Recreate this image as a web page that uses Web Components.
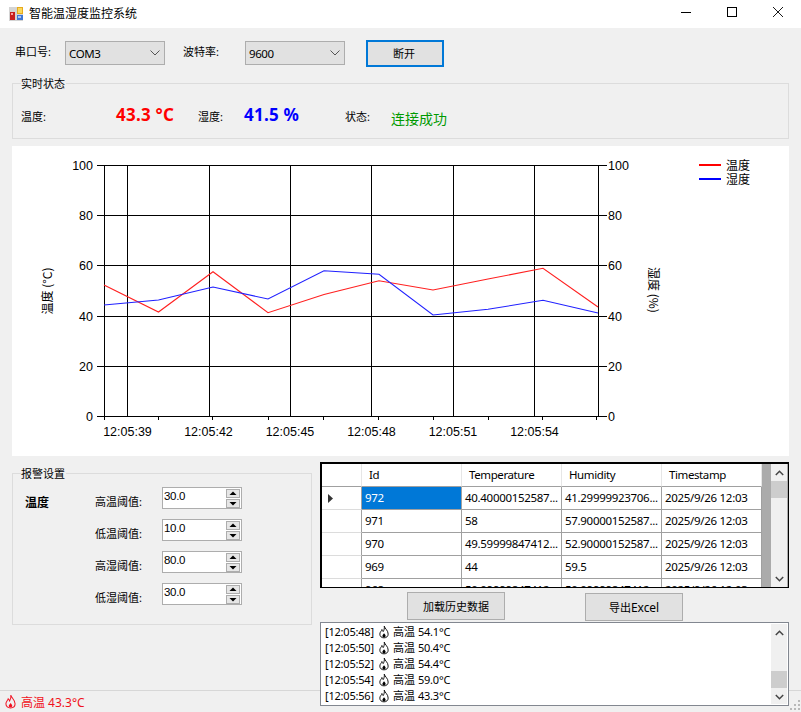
<!DOCTYPE html>
<html lang="zh"><head><meta charset="utf-8"><title>智能温湿度监控系统</title>
<style>
html,body{margin:0;padding:0;background:#f0f0f0}
body{width:801px;height:712px;overflow:hidden;font:11px "Noto Sans","Noto Sans CJK SC",sans-serif;color:#000}
</style></head><body>
<app-window>
  <title-bar>智能温湿度监控系统</title-bar>
  <connect-bar></connect-bar>
  <group-box legend="实时状态" style="--m:16px 12px 0;--h:56px"><live-status></live-status></group-box>
  <trend-chart></trend-chart>
  <lower-area></lower-area>
</app-window>
<script>
function def(name,html,init){
  customElements.define(name,class extends HTMLElement{
    connectedCallback(){
      if(this.shadowRoot)return;
      const r=this.attachShadow({mode:'open'});
      r.innerHTML=typeof html==='function'?html(this):html;
      if(init)init(r,this);
    }
  });
}

def('flame-icon',`<style>:host{display:inline-block;flex:none;width:var(--w,10px);height:var(--fh,14px);vertical-align:var(--va,-3px)}svg{display:block;width:100%;height:100%}</style>
<svg viewBox="0 0 12 16"><path d="M6.3 1C7 4 11 6 11 10.500C11 13.500 8.700 15 6 15C3.300 15 1 13.500 1 10.500C1 8 3 7 3.500 5C4.500 6 4.800 7 5 7.500C6 6 6.800 3.500 6.300 1Z" fill="none" stroke="currentColor" stroke-width="1.100"/><path d="M6 9.500C7 10.800 8.300 11.700 7.900 13.200C7.500 14.700 4.500 14.700 4.100 13.200C3.800 11.900 5.300 11 6 9.500Z" fill="currentColor"/></svg>`);

def('app-window',`<style>:host{display:flex;flex-direction:column;width:801px;height:712px;background:#f0f0f0;overflow:hidden}</style><slot></slot>`);

def('title-bar',`<style>
:host{display:flex;align-items:center;height:28px;background:#fff;padding-left:9px;box-sizing:border-box;font-size:12px}
svg{flex:none}
.t{margin-left:6px;flex:1;position:relative;top:-1px}
.c{display:flex;align-items:center;height:28px;padding-right:17px;gap:34px}
.c svg{display:block;width:12px;height:12px;position:relative;top:-2px}
</style>
<svg width="14" height="14" viewBox="0 0 14 14" shape-rendering="crispEdges"><rect width="14" height="14" fill="#d4d4d4"/><rect x="8" y="0" width="6" height="7" fill="#e8a91c"/><rect x="9" y="1" width="4" height="5" fill="#f9d85c"/><rect x="1" y="5" width="5" height="8" fill="#c81e1e"/><rect x="2" y="6" width="2" height="2" fill="#f4a0a0"/><rect x="8" y="8" width="6" height="5" fill="#3f77d6"/><rect x="9" y="9" width="3" height="2" fill="#a8c6f4"/></svg>
<span class="t"><slot></slot></span>
<span class="c">
<svg viewBox="0 0 12 12"><path d="M1 6.500H11" stroke="#000" fill="none" shape-rendering="crispEdges"/></svg>
<svg viewBox="0 0 12 12"><rect x="1.500" y="1.500" width="9" height="9" stroke="#000" fill="none" shape-rendering="crispEdges"/></svg>
<svg viewBox="0 0 12 12"><path d="M1 1L11 11M11 1L1 11" stroke="#000" stroke-width=".9" fill="none"/></svg>
</span>`);

def('win-select',h=>`<style>
:host{display:flex;align-items:center;box-sizing:border-box;width:100px;height:24px;background:#e1e1e1;border:1px solid #adadad;padding-left:3px;font-size:11.500px;letter-spacing:-.4px;color:#000}
.v{flex:1}
svg{margin-right:3px}
</style><span class="v">${h.getAttribute('value')}</span><svg width="12" height="8" viewBox="0 0 12 8"><path d="M1.500 1.500L6 6L10.500 1.500" fill="none" stroke="#555" stroke-width="1"/></svg>`);

def('win-button',`<style>
:host{display:flex;align-items:center;justify-content:center;box-sizing:border-box;background:#e1e1e1;border:1px solid #adadad;color:#000}
:host([focus]){border:2px solid #0078d7}
</style><slot></slot>`);

def('connect-bar',`<style>
:host{display:flex;align-items:flex-start;height:27px;margin-top:12px;padding-left:15px}
.l{line-height:24px;margin-top:0}
win-select{margin-top:1px}
win-button{padding:0 2px 2px 0}
</style>
<span class="l" style="width:50px">串口号:</span><win-select value="COM3"></win-select>
<span class="l" style="margin-left:18px;width:62px">波特率:</span><win-select value="9600"></win-select>
<win-button focus style="width:78px;height:27px;margin-left:21px">断开</win-button>`);

def('group-box',h=>`<style>
:host{display:block;position:relative;box-sizing:border-box;margin:var(--m,0);height:var(--h,auto);border:1px solid #dcdcdc}
.lg{position:absolute;left:8px;top:-6px;padding:0 1px 0 0;background:#f0f0f0;line-height:12px}
</style><span class="lg">${h.getAttribute('legend')}</span><slot></slot>`);

def('live-status',`<style>
:host{display:grid;grid-template-columns:95px 82px 46px 101px 46px 1fr;align-items:center;height:100%;padding:0 0 0 8px;position:relative;box-sizing:border-box}
.b{font-weight:700;font-size:17px;line-height:20px;margin-top:8px;font-family:"Noto Sans",sans-serif;letter-spacing:.25px}
.s{margin-top:9px}
.ok{font-size:14px;color:#009a00;margin-top:16px;line-height:20px}
</style>
<span class="s">温度:</span><span class="b" style="color:#f00">43.3 °C</span>
<span class="s">湿度:</span><span class="b" style="color:#00f">41.5 %</span>
<span class="s">状态:</span><span class="ok">连接成功</span>`);

function chartSvg(){
 const ys=[0,20,40,60,80,100];
 let g='';
 const xg=[127,209,290,371,453,534];
 const lx=[127.5,208.5,290,371.5,453,534.5];
 const labels=['12:05:39','12:05:42','12:05:45','12:05:48','12:05:51','12:05:54'];
 const l=104.5,r=598.5;
 [416,366,316,265,215,165].forEach((y,i)=>{
   g+=`<path d="M97 ${y+.5}H607"/>`;
   g+=`<text x="93" y="${y+5}" text-anchor="end">${ys[i]}</text><text x="608" y="${y+5}">${ys[i]}</text>`;
 });
 xg.forEach((x,i)=>{g+=`<path d="M${x+.5} 165V416"/><text x="${lx[i]}" y="436" text-anchor="middle">${labels[i]}</text>`});
 g+=`<path d="M${l} 165V416M${r} 165V416"/>`;
 [104,158,212,268,323,378,433,488,542,596].forEach(x=>{g+=`<path d="M${x+.5} 416V420"/>`});
 const xs=[104,158.5,213,268,324,379,433,488,543,598];
 const red=[285,312,271.7,312.7,294.5,280.7,290,279,268.3,307];
 const blue=[305,300,287,299,270.7,274.3,315,309.3,300.3,313];
 const pl=a=>a.map((y,i)=>xs[i]+','+y).join(' ');
 return `<svg width="777" height="310" viewBox="12 146 777 310" style="display:block">
 <g stroke="#000" fill="none" shape-rendering="crispEdges" class="ax">${g}</g>
 <polyline points="${pl(red)}" fill="none" stroke="#ff2020" stroke-width="1.100"/>
 <polyline points="${pl(blue)}" fill="none" stroke="#2020ff" stroke-width="1.100"/>
 <text class="cj" transform="translate(52 291) rotate(-90)" text-anchor="middle">温度 (°C)</text>
 <text class="cj" transform="translate(649 290) rotate(90)" text-anchor="middle">湿度 (%)</text>
 <path d="M699 165H721" stroke="#f00" stroke-width="2"/><path d="M699 179H721" stroke="#00f" stroke-width="2"/>
 <text class="cj" x="726" y="169.500">温度</text><text class="cj" x="726" y="183.500">湿度</text>
 </svg>`;
}
def('trend-chart',()=>`<style>
:host{display:block;margin:7px 12px 0;width:777px;height:310px;background:#fff;flex:none}
text{font:12.500px "Liberation Sans",sans-serif;fill:#000;stroke:none}
.cj{font:12px "Noto Sans CJK SC","Noto Sans",sans-serif}
</style>${chartSvg()}`);

def('num-spin',h=>`<style>
:host{display:flex;box-sizing:border-box;width:80px;height:22px;background:#fff;border:1px solid #adadad;font:11.500px "Liberation Sans",sans-serif;letter-spacing:-.3px;padding-left:1px;line-height:17px;color:#000}
.v{flex:1}
.s{display:flex;flex-direction:column;justify-content:center;gap:1px;width:14px;margin-right:1px}
.s svg{display:block;box-sizing:border-box;width:14px;height:9px;background:#e6e6e6;border:1px solid #adadad}
</style><span class="v">${h.getAttribute('value')}</span><span class="s">
<svg viewBox="0 0 12 7"><path d="M6 1.500L9.500 5H2.500Z" fill="#000"/></svg><svg viewBox="0 0 12 7"><path d="M6 5.500L9.500 2H2.500Z" fill="#000"/></svg></span>`);

def('alarm-settings',`<style>
:host{display:grid;grid-template-columns:70px 67px 80px;grid-auto-rows:22px;row-gap:10px;padding:13px 0 0 12px;align-items:center}
.h{font-weight:700;font-size:12px;line-height:22px;position:relative;top:5px}
.l{text-align:left;white-space:nowrap;line-height:22px;position:relative;top:4px}
</style>
<span class="h">温度</span><span class="l">高温阈值:</span><num-spin value="30.0"></num-spin>
<span></span><span class="l">低温阈值:</span><num-spin value="10.0"></num-spin>
<span></span><span class="l">高湿阈值:</span><num-spin value="80.0"></num-spin>
<span></span><span class="l">低湿阈值:</span><num-spin value="30.0"></num-spin>`);

def('scroll-bar',h=>`<style>
:host{display:flex;flex-direction:column;align-items:center;flex:none;box-sizing:border-box;width:16px;background:#f0f0f0;position:relative}
.a{height:17px;display:flex;align-items:center;justify-content:center;flex:none}
.tr{flex:1;display:flex;flex-direction:column;width:100%}
.th{height:17px;background:#cdcdcd;margin-top:${h.getAttribute('pos')}px}
</style><span class="a"><svg width="9" height="6" viewBox="0 0 9 6"><path d="M.8 5L4.500 1.300L8.200 5" fill="none" stroke="#444" stroke-width="1.500"/></svg></span>
<span class="tr"><span class="th"></span></span>
<span class="a"><svg width="9" height="6" viewBox="0 0 9 6"><path d="M.8 1L4.500 4.700L8.200 1" fill="none" stroke="#444" stroke-width="1.500"/></svg></span>`);

const rows=[['972','40.40000152587...','41.29999923706...','2025/9/26 12:03'],
['971','58','57.90000152587...','2025/9/26 12:03'],
['970','49.59999847412...','52.90000152587...','2025/9/26 12:03'],
['969','44','59.5','2025/9/26 12:03'],
['968','50.09999847412...','50.09999847412...','2025/9/26 12:03']];
def('data-grid',()=>`<style>
:host{display:flex;box-sizing:border-box;height:126px;border:solid #000;border-width:2px 1px 1px 2px;background:#ababab;font-size:11.500px;letter-spacing:-.3px;overflow:hidden;flex:none}
.g{display:grid;grid-template-columns:40px repeat(4,100px);grid-auto-rows:23px;align-content:start;width:440px;flex:none}
.g>*{box-sizing:border-box;background:#fff;border-right:1px solid #a0a0a0;border-bottom:1px solid #a0a0a0;padding-left:3px;white-space:nowrap;overflow:hidden;line-height:22px}
.hd{padding-left:7px!important;border-right-color:#e6e6e6!important;letter-spacing:-.4px}
.rh{padding:0!important;display:flex;align-items:center;justify-content:flex-start;border-bottom-color:#dcdcdc!important}
.rh svg{margin-left:6px}
.sel{background:#0078d7!important;color:#fff}
.gap{flex:1}
scroll-bar{margin-right:1px}
</style><div class="g">
<div class="hd"></div><div class="hd">Id</div><div class="hd">Temperature</div><div class="hd">Humidity</div><div class="hd">Timestamp</div>
${rows.map((r,i)=>`<div class="rh">${i==0?'<svg width="5" height="9" viewBox="0 0 5 9"><path d="M0 0L5 4.500L0 9Z" fill="#333"/></svg>':''}</div>`+r.map((c,j)=>`<div class="${i==0&&j==0?'sel':''}">${c}</div>`).join('')).join('')}
</div><span class="gap"></span><scroll-bar pos="0"></scroll-bar>`);

const logs=[['12:05:48','54.1'],['12:05:50','50.4'],['12:05:52','54.4'],['12:05:54','59.0'],['12:05:56','43.3']];
def('log-box',()=>`<style>
:host{display:flex;box-sizing:border-box;height:84px;border:1px solid #828790;background:#fff;font-size:11px;flex:none;position:relative;z-index:1;padding:1px 1px 1px 0}
.ls{flex:1;padding:0 0 0 4px}
.r{height:16px;line-height:16px;white-space:nowrap;display:flex;align-items:center;letter-spacing:-.2px}
.z{margin:0 3px 0 0;letter-spacing:0}
flame-icon{margin:0 4px 0 5px}
</style><div class="ls">${logs.map(([a,b])=>`<div class="r">[${a}]<flame-icon></flame-icon><span class="z">高温</span>${b}°C</div>`).join('')}</div><scroll-bar pos="30"></scroll-bar>`);

def('status-strip',`<style>
:host{display:flex;align-items:center;box-sizing:border-box;height:22px;border-top:1px solid #d7d7d7;color:#f01020;padding-left:5px;position:relative;font-size:12px}
.t{margin-left:5px}
.grip{position:absolute;right:1px;bottom:2px}
flame-icon{--w:11px;--fh:15px}
</style><flame-icon></flame-icon><span class="t">高温 43.3°C</span>
<svg class="grip" width="10" height="10" viewBox="0 0 10 10" fill="#b8b8b8" shape-rendering="crispEdges"><rect x="8" y="0" width="2" height="2"/><rect x="4" y="4" width="2" height="2"/><rect x="8" y="4" width="2" height="2"/><rect x="0" y="8" width="2" height="2"/><rect x="4" y="8" width="2" height="2"/><rect x="8" y="8" width="2" height="2"/></svg>`);

def('lower-area',`<style>
:host{display:grid;grid-template-columns:12px 300px 8px 469px 12px;grid-template-rows:1fr;flex:1;min-height:0}
group-box{grid-area:1/2;align-self:start}
.r{grid-area:1/4;display:flex;flex-direction:column;padding-top:6px;position:relative;z-index:1}
status-strip{grid-area:1/1/2/-1;align-self:end}
.b{display:flex;height:30px;margin-top:4px;flex:none}
win-button{width:98px;height:28px}
</style>
<status-strip></status-strip>
<group-box legend="报警设置" style="--m:17px 0 0;--h:152px"><alarm-settings></alarm-settings></group-box>
<div class="r"><data-grid></data-grid>
<div class="b"><win-button style="margin-left:87px">加载历史数据</win-button><win-button style="margin:1px 0 0 80px">导出<span style="font-size:12px;letter-spacing:-.1px">Excel</span></win-button></div>
<log-box></log-box></div>`);
</script>
</body></html>
